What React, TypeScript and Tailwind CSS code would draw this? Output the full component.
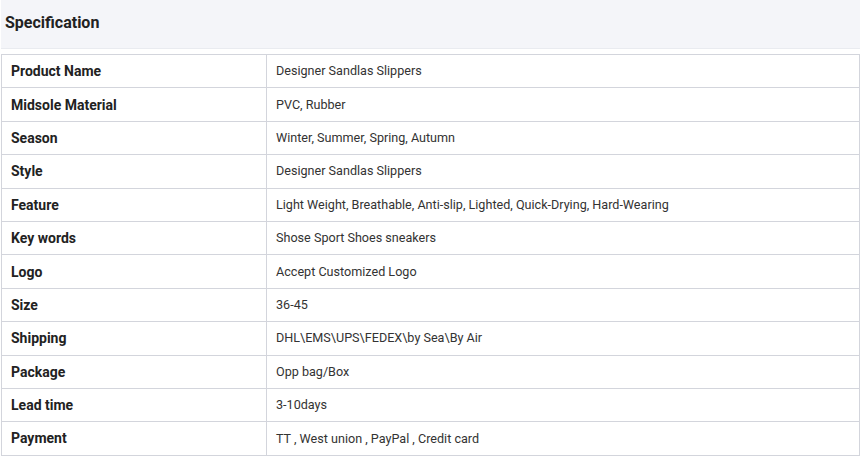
import React from "react";

const rows: [string, string][] = [
  ["Product Name", "Designer Sandlas Slippers"],
  ["Midsole Material", "PVC, Rubber"],
  ["Season", "Winter, Summer, Spring, Autumn"],
  ["Style", "Designer Sandlas Slippers"],
  ["Feature", "Light Weight, Breathable, Anti-slip, Lighted, Quick-Drying, Hard-Wearing"],
  ["Key words", "Shose Sport Shoes sneakers"],
  ["Logo", "Accept Customized Logo"],
  ["Size", "36-45"],
  ["Shipping", "DHL\\EMS\\UPS\\FEDEX\\by Sea\\By Air"],
  ["Package", "Opp bag/Box"],
  ["Lead time", "3-10days"],
  ["Payment", "TT , West union , PayPal , Credit card"],
];

export default function App() {
  return (
    <div className="w-[866px] h-[459px] bg-white font-['Roboto',sans-serif] text-[#222]">
      <div className="ml-[1px] w-[859px] h-[49px] bg-[#f4f5f9] border-b border-[#e9ebf0] flex items-center pl-[4px]">
        <h2 className="text-[16px] font-bold text-[#222] -mt-[2px]">Specification</h2>
      </div>
      <table className="mt-[5px] ml-[1px] w-[859px] border-collapse border border-[#d3d5dc]">
        <tbody>
          {rows.map(([k, v]) => (
            <tr key={k} className="h-[33.4px]">
              <td className="w-[265px] border border-[#d3d5dc] pl-[9px] pt-[1px] text-[14px] font-bold text-[#222]">{k}</td>
              <td className="border border-[#d3d5dc] pl-[9px] pt-[1px] text-[12.6px] text-[#333]">{v}</td>
            </tr>
          ))}
        </tbody>
      </table>
    </div>
  );
}
